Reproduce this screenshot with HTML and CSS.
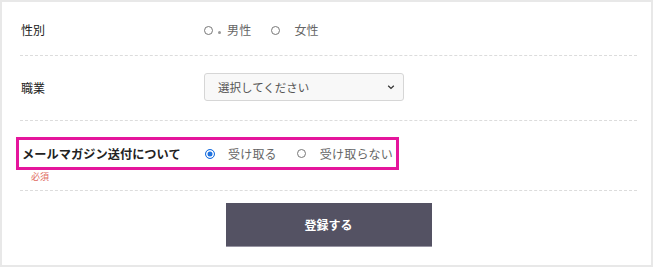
FILE: index.html
```html
<!DOCTYPE html>
<html lang="ja">
<head>
<meta charset="utf-8">
<link rel="stylesheet" href="styles.css">
</head>
<body>
<div class="frame">
  <div class="row row-gender">
    <div class="label">性別</div>
    <div class="options">
      <span class="opt"><span class="radio"></span><span class="dot"></span><span class="opt-text">男性</span></span>
      <span class="opt"><span class="radio"></span><span class="opt-text">女性</span></span>
    </div>
  </div>
  <div class="row row-job">
    <div class="label">職業</div>
    <div class="select">
      <span>選択してください</span>
      <svg class="chev" width="8" height="6" viewBox="0 0 8 6"><path d="M1.2 1.8 L4 4.4 L6.8 1.8" fill="none" stroke="#333" stroke-width="1.3"/></svg>
    </div>
  </div>
  <div class="row row-mail">
    <div class="highlight">
      <div class="label label-strong">メールマガジン送付について</div>
      <div class="options">
        <span class="opt"><span class="radio checked"></span><span class="opt-text">受け取る</span></span>
        <span class="opt"><span class="radio"></span><span class="opt-text">受け取らない</span></span>
      </div>
    </div>
    <div class="required">必須</div>
  </div>
  <div class="actions">
    <button class="submit">登録する</button>
  </div>
</div>
</body>
</html>
```

FILE: styles.css
```css
html, body {
  margin: 0;
  padding: 0;
  background: #fff;
}
body {
  font-family: "Noto Sans CJK JP", "Noto Sans", sans-serif;
  color: #333;
}
.frame {
  width: 653px;
  height: 267px;
  box-sizing: border-box;
  border: 2px solid #e8e8e8;
  padding: 0 14px 0 18px;
}
.row {
  border-bottom: 1px dashed #dcdcdc;
}
.row-gender {
  display: flex;
  align-items: center;
  padding: 18px 0 15px;
  line-height: 20px;
}
.row-job {
  display: flex;
  align-items: center;
  padding: 17px 0 19px;
}
.row-mail {
  padding: 16px 0 8px;
}
.label {
  width: 184px;
  flex: none;
  font-size: 12px;
  font-weight: 400;
  color: #222;
  padding-left: 1px;
  box-sizing: border-box;
}
.label-strong {
  width: 183px;
  padding-left: 0;
  font-weight: 700;
  font-size: 12.2px;
  letter-spacing: 0.05px;
  color: #222;
}
.options {
  display: flex;
  align-items: center;
  gap: 20px;
}
.opt {
  display: flex;
  align-items: center;
}
.radio {
  width: 9px;
  height: 9px;
  box-sizing: border-box;
  border: 1px solid #777;
  border-radius: 50%;
  background: #fff;
  margin-right: 14px;
}
.radio.checked {
  width: 10px;
  height: 10px;
  border-color: #1f72e0;
  background: #1f72e0;
  box-shadow: inset 0 0 0 1.5px #fff;
  margin-right: 13px;
}
.dot {
  width: 3px;
  height: 3px;
  border-radius: 50%;
  background: #999;
  margin: 4px 6px 0 -9px;
}
.opt-text {
  font-size: 12px;
  letter-spacing: 0.2px;
  color: #666;
}
.select {
  width: 200px;
  height: 28px;
  box-sizing: border-box;
  border: 1px solid #d6d6d6;
  border-radius: 3px;
  background: #f8f8f8;
  display: flex;
  align-items: center;
  justify-content: space-between;
  padding: 0 8px 0 13px;
  font-size: 11.5px;
  color: #555;
}
.highlight {
  display: inline-flex;
  align-items: center;
  border: 3px solid #e5159c;
  margin-left: -4px;
  padding: 0 3px;
  height: 33px;
  box-sizing: border-box;
}
.required {
  font-size: 9px;
  line-height: 10px;
  color: #e06b60;
  margin: 2px 0 0 11px;
}
.actions {
  display: flex;
  justify-content: center;
  padding-top: 12px;
}
.submit {
  width: 206px;
  height: 43px;
  border: none;
  border-radius: 0;
  background: #545263;
  box-shadow: 0 1px 0 #9794a2;
  color: #fff;
  font-family: "Noto Sans CJK JP", sans-serif;
  font-size: 12px;
  font-weight: 700;
  padding: 0;
}
```
